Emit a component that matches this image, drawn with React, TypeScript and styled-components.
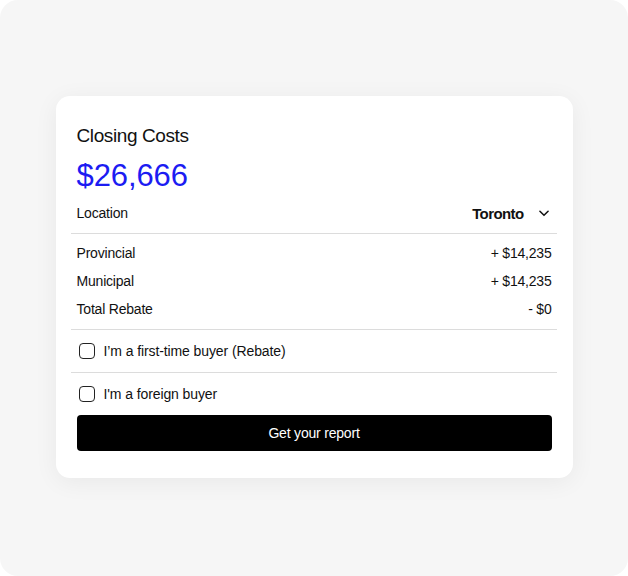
import React, { useState } from "react";
import styled, { createGlobalStyle } from "styled-components";

const Global = createGlobalStyle`
  html, body { margin: 0; padding: 0; background: #ffffff; }
  body { font-family: "Liberation Sans", Arial, sans-serif; color: #111; }
  * { box-sizing: border-box; }
`;

const Page = styled.div`
  width: 628px;
  height: 576px;
  background: #f6f6f6;
  border-radius: 18px;
  display: flex;
  align-items: center;
  justify-content: center;
`;

const Card = styled.div`
  width: 517px;
  height: 382px;
  margin-top: -2px;
  background: #ffffff;
  border-radius: 14px;
  box-shadow: 0 4px 24px rgba(0, 0, 0, 0.06);
  padding: 28px 21px 26px 21px;
  display: flex;
  flex-direction: column;
`;

const Title = styled.h1`
  margin: 0;
  font-size: 19px;
  line-height: 23px;
  font-weight: 400;
  letter-spacing: -0.4px;
  color: #111;
`;

const Total = styled.div`
  margin-top: 11px;
  font-size: 31px;
  line-height: 36px;
  font-weight: 400;
  color: #1c1cf2;
  letter-spacing: -0.1px;
`;

const LocationRow = styled.div`
  display: flex;
  align-items: center;
  justify-content: space-between;
  height: 28px;
  margin-top: 5px;
  margin-bottom: 6px;
`;

const Label = styled.span`
  font-size: 14px;
  letter-spacing: -0.2px;
  color: #111;
`;

const Select = styled.button`
  display: flex;
  align-items: center;
  gap: 13px;
  background: none;
  border: none;
  padding: 0;
  margin-right: 1px;
  cursor: pointer;
  font-family: inherit;
  font-size: 15px;
  font-weight: 700;
  letter-spacing: -0.6px;
  color: #111;
`;

const Divider = styled.hr`
  border: none;
  height: 1px;
  background: #dcdcdc;
  margin: 0 -5px 0 -6px;
`;

const Breakdown = styled.div`
  display: flex;
  flex-direction: column;
  padding: 5px 0 6px;
`;

const Row = styled.div`
  display: flex;
  align-items: center;
  justify-content: space-between;
  height: 28px;
`;

const Amount = styled.span`
  font-size: 14px;
  letter-spacing: -0.2px;
  color: #111;
`;

const CheckRow = styled.label`
  display: flex;
  align-items: center;
  gap: 9px;
  height: 42px;
  padding-left: 2px;
  cursor: pointer;
  font-size: 14px;
  letter-spacing: -0.1px;
  color: #111;
`;

const Box = styled.span<{ $checked: boolean }>`
  width: 16px;
  height: 16px;
  border: 1.5px solid #222;
  border-radius: 4px;
  background: ${(p) => (p.$checked ? "#111" : "#fff")};
  flex-shrink: 0;
`;

const HiddenInput = styled.input`
  display: none;
`;

const Button = styled.button`
  height: 36px;
  border: none;
  border-radius: 4px;
  background: #000;
  color: #fff;
  font-family: inherit;
  font-size: 14px;
  letter-spacing: -0.2px;
  cursor: pointer;
`;

const Chevron = () => (
  <svg width="14" height="14" viewBox="0 0 24 24" fill="none" stroke="#111" strokeWidth="2.6" strokeLinecap="round" strokeLinejoin="round">
    <path d="M5 9l7 7 7-7" />
  </svg>
);

const Check = ({ label }: { label: string }) => {
  const [on, setOn] = useState(false);
  return (
    <CheckRow>
      <HiddenInput type="checkbox" checked={on} onChange={() => setOn(!on)} />
      <Box $checked={on} />
      {label}
    </CheckRow>
  );
};

const rows = [
  { label: "Provincial", value: "+ $14,235" },
  { label: "Municipal", value: "+ $14,235" },
  { label: "Total Rebate", value: "- $0" },
];

export default function App() {
  return (
    <>
      <Global />
      <Page>
        <Card>
          <Title>Closing Costs</Title>
          <Total>$26,666</Total>
          <LocationRow>
            <Label>Location</Label>
            <Select>
              Toronto
              <Chevron />
            </Select>
          </LocationRow>
          <Divider />
          <Breakdown>
            {rows.map((r) => (
              <Row key={r.label}>
                <Label>{r.label}</Label>
                <Amount>{r.value}</Amount>
              </Row>
            ))}
          </Breakdown>
          <Divider />
          <Check label="I’m a first-time buyer (Rebate)" />
          <Divider />
          <Check label="I'm a foreign buyer" />
          <Button>Get your report</Button>
        </Card>
      </Page>
    </>
  );
}
